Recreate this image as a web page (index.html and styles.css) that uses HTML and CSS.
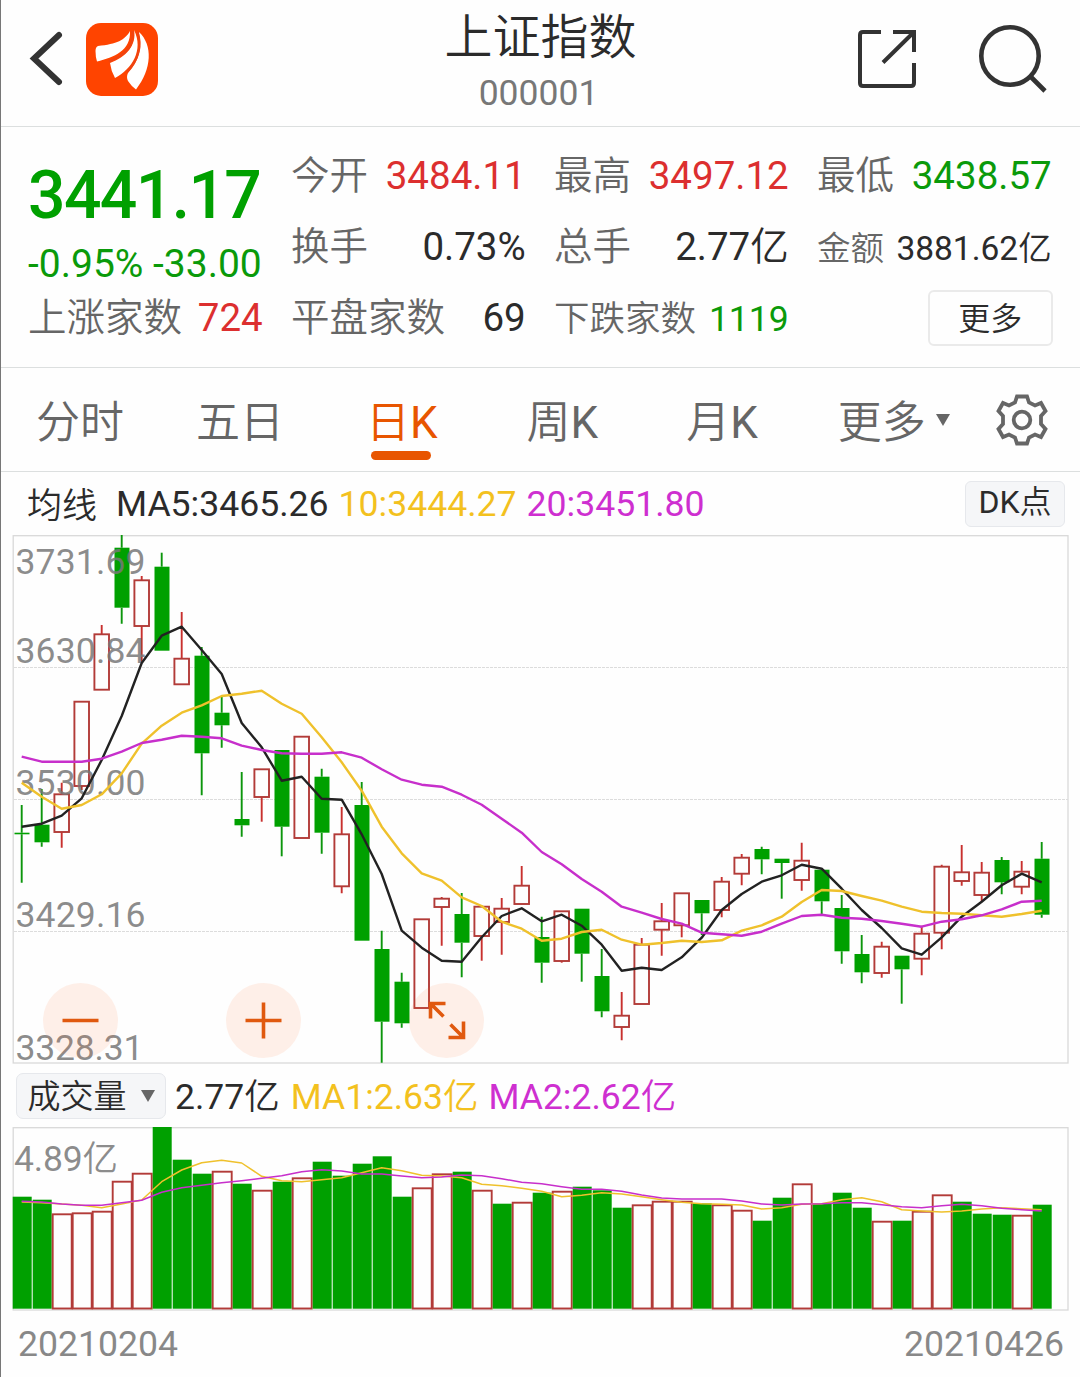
FILE: index.html
```html
<!DOCTYPE html>
<html lang="zh-CN">
  <head>
    <meta charset="UTF-8" />
    <meta name="viewport" content="width=device-width, initial-scale=1.0" />
    <title>上证指数 000001</title>
    <link rel="stylesheet" href="styles.css">
  </head>
  <body>
    <header class="header">
      <div class="header-left">
        <svg class="back-icon" width="36" height="58" viewBox="0 0 36 58">
          <path d="M30 5 L5 28.500 L30 52" fill="none" stroke="#333" stroke-width="6" stroke-linecap="round" stroke-linejoin="miter" />
        </svg>
        <svg class="logo" width="72" height="73" viewBox="0 0 72 73">
          <rect width="72" height="73" rx="15" fill="#ff4400" />
          <path d="M44 8 C39 17 31 21 12 23 Q9.500 24 9.500 28 Q9.500 34 11 38.500 C28 34 45 28 44 8 Z" fill="#fff" />
          <path d="M48 7 C51 22 40 34 24 40 Q25 48 29 55 C46 46 58 27 48 7 Z" fill="#fff" />
          <path d="M53 9 C56 26 53 38 42 50 Q40 54 42 58 Q46 64 50 66.500 C66 46 67 22 53 9 Z" fill="#fff" />
          <path d="M46.500 8 C48 22 42 31 23 38.500 M51.500 9 C57 24 51 38 41 49" fill="none" stroke="#ee4312" stroke-width="2" />
        </svg>
      </div>
      <div class="header-title">
        <h1>上证指数</h1>
        <p>000001</p>
      </div>
      <div class="header-right">
        <svg width="60" height="60" viewBox="0 0 60 60" fill="none" stroke="#333" stroke-width="4">
          <path d="M24 3 H6 Q3 3 3 6 V54 Q3 57 6 57 H54 Q57 57 57 54 V34" />
          <path d="M36 3 H57 V23 M57 3 L26 33.500" />
        </svg>
        <svg width="72" height="72" viewBox="0 0 72 72" fill="none" stroke="#333" stroke-width="4.600">
          <circle cx="33" cy="32" r="28.700" />
          <path d="M53 52 L68 67" />
        </svg>
      </div>
    </header>

    <section class="summary">
      <div class="summary-col">
        <div class="price down">3441.17</div>
        <div class="change down">-0.95% -33.00</div>
        <div class="cell"><span>上涨家数</span><b class="up">724</b></div>
      </div>
      <div class="summary-col">
        <div class="cell"><span>今开</span><b class="up open">3484.11</b></div>
        <div class="cell"><span>换手</span><b>0.73%</b></div>
        <div class="cell"><span>平盘家数</span><b>69</b></div>
      </div>
      <div class="summary-col">
        <div class="cell"><span>最高</span><b class="up">3497.12</b></div>
        <div class="cell"><span>总手</span><b>2.77亿</b></div>
        <div class="cell cell-medium"><span>下跌家数</span><b class="down">1119</b></div>
      </div>
      <div class="summary-col">
        <div class="cell"><span>最低</span><b class="down">3438.57</b></div>
        <div class="cell cell-small"><span>金额</span><b>3881.62亿</b></div>
        <div class="cell cell-end"><button class="more-button">更多</button></div>
      </div>
    </section>

    <nav class="tabs">
      <a class="tab">分时</a>
      <a class="tab">五日</a>
      <a class="tab active">日K</a>
      <a class="tab tab-week">周K</a>
      <a class="tab tab-month">月K</a>
      <a class="tab tab-more">更多<i class="caret"></i></a>
      <svg class="gear" width="54" height="54" viewBox="-27 -27 54 54" fill="none" stroke="#666" stroke-width="3.800">
        <path d="M-5 -23.500 H5 L7 -17.500 L13 -14.500 L19 -17 L23.500 -9 L19 -4 V4 L23.500 9 L19 17 L13 14.500 L7 17.500 L5 23.500 H-5 L-7 17.500 L-13 14.500 L-19 17 L-23.500 9 L-19 4 V-4 L-23.500 -9 L-19 -17 L-13 -14.500 L-7 -17.500 Z" />
        <circle r="8.300" />
      </svg>
    </nav>

    <div class="ma-row">
      <span class="ma-name">均线</span>
      <span class="ma5">MA5:3465.26</span>
      <span class="ma10">10:3444.27</span>
      <span class="ma20">20:3451.80</span>
      <button class="dk-button">DK点</button>
    </div>

    <div class="chart">
      <svg id="kline" width="1057" height="529" viewBox="12 535 1057 529"></svg>
      <div class="chart-tools">
        <svg class="tool" viewBox="-37.500 -37.500 75 75"><path d="M-18 0 H18" /></svg>
        <svg class="tool" viewBox="-37.500 -37.500 75 75"><path d="M-18 0 H18 M0 -18 V18" /></svg>
        <svg class="tool" viewBox="-37.500 -37.500 75 75"><path d="M-3 -4 L-16 -17 M-16 -2 V-17 H-1 M4 4 L17 17 M17 1 V17 H2" /></svg>
      </div>
    </div>

    <div class="volume-row">
      <button class="volume-select">成交量<i class="caret caret-big"></i></button>
      <span class="vol-now">2.77亿</span>
      <span class="ma10">MA1:2.63亿</span>
      <span class="ma20">MA2:2.62亿</span>
    </div>

    <div class="volume-chart">
      <svg id="volume" width="1057" height="184" viewBox="12 1127 1057 184"></svg>
    </div>

    <footer class="dates">
      <span>20210204</span>
      <span>20210426</span>
    </footer>

    <script src="chart.js"></script>
  </body>
</html>
```
FILE: styles.css
```css
/* Basic reset */
* {
  margin: 0;
  padding: 0;
  box-sizing: border-box;
}

body {
  width: 1080px;
  height: 1377px;
  overflow: hidden;
  border-left: 1px solid #777;
  background-color: #fefefe;
  font-family: Roboto, "Noto Sans CJK SC DemiLight", "Noto Sans CJK SC", sans-serif;
  color: #2b2b2b;
}

svg {
  display: block;
}

button {
  font-family: inherit;
  color: inherit;
}

.up {
  color: #dc2f2f;
}

.down {
  color: #0a9a0a;
}

/* Header */
.header {
  display: grid;
  grid-template-columns: 1fr auto 1fr;
  height: 127px;
  border-bottom: 1px solid #dcdfdf;
}

.header-left {
  display: flex;
  padding: 23px 0 0 28px;
}

.back-icon {
  margin: 7px 21px 0 0;
}

.header-title {
  text-align: center;
}

.header-title h1 {
  font-size: 48px;
  font-weight: 400;
  line-height: 56px;
  padding-top: 10px;
}

.header-title p {
  font-size: 35.500px;
  line-height: 40px;
  margin-top: 7px;
  padding-right: 4px;
  color: #777;
}

.header-right {
  display: flex;
  justify-content: flex-end;
  gap: 60px;
  padding: 24px 31px 0 0;
}

.header-right svg:first-child {
  margin-top: 5px;
}

/* Quote summary */
.summary {
  display: flex;
  height: 241px;
  padding: 13px 0 0 27px;
  border-bottom: 1px solid #dcdfdf;
}

.summary-col {
  width: 235px;
  margin-right: 28.300px;
}

.price {
  height: 109px;
  line-height: 111px;
  font-size: 66px;
  font-weight: 500;
  letter-spacing: -1.600px;
  white-space: nowrap;
  color: #00a000;
}

.change {
  height: 30px;
  line-height: 30px;
  margin-bottom: 3px;
  font-size: 39px;
  white-space: nowrap;
}

.cell {
  display: flex;
  justify-content: space-between;
  align-items: center;
  height: 71px;
  font-size: 38.500px;
  line-height: 71px;
  white-space: nowrap;
}

.cell span {
  color: #666;
}

.cell b {
  font-weight: 400;
}

.cell-medium {
  padding-top: 4px;
  font-size: 35.500px;
}

.cell-small {
  padding-top: 4px;
  font-size: 33.500px;
}

.cell-end {
  justify-content: flex-end;
}

.more-button {
  width: 125px;
  height: 56px;
  margin-right: -1px;
  padding-bottom: 3px;
  background-color: #fefefe;
  border: 2px solid #eaeaea;
  border-radius: 6px;
  font-size: 32px;
}

/* Period tabs */
.tabs {
  display: flex;
  align-items: center;
  height: 104px;
  padding-left: 35px;
  border-bottom: 1px solid #dcdfdf;
  font-size: 44px;
  color: #666;
}

.tab {
  position: relative;
  height: 103px;
  line-height: 110px;
  margin-right: 72px;
  white-space: nowrap;
}

.tab.active {
  color: #e85500;
  margin: 0 89px 0 10px;
}

.tab.active::after {
  content: "";
  position: absolute;
  left: 5px;
  bottom: 11px;
  width: 60px;
  height: 9px;
  border-radius: 5px;
  background-color: #e85500;
}

.tab-week {
  margin-right: 88px;
}

.tab-month {
  margin-right: 80px;
}

.tab-more {
  margin-right: 45px;
}

.caret {
  display: inline-block;
  margin-left: 10px;
  vertical-align: 12px;
  border: 7.500px solid transparent;
  border-top: 12px solid #666;
  border-bottom: 0;
}

.caret-big {
  vertical-align: 6px;
  margin-left: 14px;
}

/* Moving averages */
.ma-row {
  display: flex;
  align-items: center;
  height: 63px;
  padding: 0 15px 0 26px;
  font-size: 35.600px;
  white-space: nowrap;
}

.ma-name {
  margin: 0 19px 3px 0;
  font-size: 35px;
}

.ma5 {
  margin-right: 10px;
}

.ma10 {
  margin-right: 10px;
  color: #f3c11e;
}

.ma20 {
  color: #ce2fd0;
}

.dk-button {
  width: 100px;
  height: 46px;
  margin-left: auto;
  background-color: #f5f6f8;
  border: 1px solid #e6e8ec;
  border-radius: 6px;
  font-size: 32px;
  line-height: 36px;
  padding-bottom: 4px;
}

/* Candle chart */
.chart {
  position: relative;
  height: 529px;
  margin-left: 11px;
}

.chart-tools {
  position: absolute;
  left: 31px;
  top: 448px;
  display: flex;
  gap: 108px;
}

.tool {
  width: 75px;
  height: 75px;
  border-radius: 50%;
  background-color: rgba(255, 112, 40, 0.1);
  fill: none;
  stroke: #e0590f;
  stroke-width: 3.600;
}

.frame {
  fill: none;
  stroke: #d9d9d9;
  stroke-width: 1.300;
}

.grid {
  stroke: #dcdcdc;
  stroke-dasharray: 3 1;
}

.axis {
  font-size: 35.500px;
  fill: #777;
  fill-opacity: 0.85;
}

.rise {
  fill: #fefefe;
  stroke: #b23b38;
  stroke-width: 1.900;
}

.fall {
  fill: #00a000;
}

.wick-rise {
  stroke: #c8302e;
  stroke-width: 1.900;
}

.wick-fall {
  stroke: #0c960c;
  stroke-width: 1.900;
}

.line {
  fill: none;
  stroke-width: 2.400;
  stroke-linejoin: round;
}

.line-thin {
  stroke-width: 1.500;
}

.black {
  stroke: #222;
}

.yellow {
  stroke: #efc12c;
}

.purple {
  stroke: #c72fcb;
}

/* Volume */
.volume-row {
  display: flex;
  align-items: center;
  height: 63px;
  padding-left: 15px;
  font-size: 35.500px;
  white-space: nowrap;
}

.volume-row span {
  padding-bottom: 5px;
}

.volume-select {
  width: 150px;
  height: 46px;
  margin-right: 9px;
  background-color: #f5f6f8;
  border: 1px solid #e6e8ec;
  border-radius: 7px;
  font-size: 33px;
  line-height: 45px;
}

.vol-now {
  margin-right: 11px;
}

.volume-chart {
  height: 184px;
  margin-left: 11px;
}

.dates {
  display: flex;
  justify-content: space-between;
  padding: 0 16px 0 17px;
  font-size: 35.600px;
  line-height: 66px;
  color: #888;
}
```
FILE: chart.js
```js
// direction, high, body top, body bottom, low
const candles = [
  ["g", 805, 832.7, 834.3, 882.7], ["g", 789, 824.7, 842.3, 846.7], ["r", 782.7, 794.3, 832, 847.7],
  ["r", 701.7, 701.7, 786, 790], ["r", 625, 634.3, 689.7, 689.7], ["g", 535, 547.7, 607.7, 623.7],
  ["r", 576, 580.3, 626, 661.7], ["g", 552.7, 566.7, 650.7, 650.7], ["r", 612, 658.7, 684.3, 684.3],
  ["g", 647, 655.7, 753.3, 795.3], ["g", 696, 712.7, 725.3, 747.7], ["g", 772, 819, 825.3, 836.7],
  ["r", 769.3, 769.3, 797, 821.7], ["g", 750, 750, 826.7, 856.3], ["r", 736.7, 736.7, 838, 838],
  ["g", 768.7, 776.7, 832.7, 853.7], ["r", 807, 834.3, 886.3, 893.3], ["g", 782, 805, 940.7, 940.7],
  ["g", 930.7, 949, 1021.7, 1062.7], ["g", 972.7, 981.7, 1023.3, 1027.7], ["r", 919.3, 919.3, 1008, 1008],
  ["r", 897, 898.7, 907, 945.7], ["g", 893, 914, 942.7, 977.3], ["r", 906.7, 906.7, 936, 960.7],
  ["r", 898, 908.7, 922, 954.7], ["r", 866, 885.7, 904, 904], ["g", 916.7, 937, 962.7, 982.7],
  ["r", 911.3, 911.3, 961, 962.7], ["g", 908.7, 908.7, 953.7, 981.7], ["g", 949, 976, 1011.3, 1017.3],
  ["r", 992, 1015.7, 1027, 1040.3], ["r", 938, 944.7, 1004, 1004], ["r", 903, 921.3, 929.7, 955.7],
  ["r", 893.3, 893.3, 925.3, 937.3], ["g", 900, 900, 913.3, 935], ["r", 877, 881.7, 910, 917.3],
  ["r", 854, 857.7, 873.7, 885.3], ["g", 846.7, 849, 859.3, 874.3], ["g", 858.7, 858.7, 863, 898.7],
  ["r", 842.7, 860.7, 880, 890.7], ["g", 869.7, 869.7, 901.3, 915], ["g", 895, 908, 951.3, 963.7],
  ["g", 935, 954, 972.3, 983.3], ["r", 941.7, 946.7, 973, 977.7], ["g", 955.7, 955.7, 969.3, 1003.7],
  ["r", 925.7, 933.7, 958.7, 975.3], ["r", 864.7, 866.7, 932.7, 949.3], ["r", 845, 872.3, 881, 885.7],
  ["r", 862, 872.7, 895, 902], ["g", 857, 860, 882.3, 894.3], ["r", 861, 871.7, 886.7, 894.3],
  ["g", 842, 858.7, 914.7, 917.7],
];

const ma5 = [
  826.7, 823.7, 815.7, 798.3, 760, 716, 663, 635.7, 626.7, 650, 674, 723, 747.3, 780.7, 776.7, 798.7,
  799.7, 834.3, 874, 930.7, 947.7, 960.7, 961.7, 937.3, 916, 908.3, 921.3, 914.7, 925.7, 944.7, 970.7,
  967.7, 970, 957.3, 937.7, 910, 894, 881.7, 875.3, 864.7, 868.7, 888.7, 910, 928, 948.3, 954.7, 937.3,
  916.7, 901.7, 885.3, 873.7, 882.3,
];

const ma10 = [
  782.7, 796.7, 808.7, 805, 794.3, 773.3, 743.7, 725.7, 712.7, 705.3, 696, 693.7, 690.7, 703.7, 713.7,
  737.3, 762.3, 790.7, 826.7, 853.3, 873.3, 880.7, 897.3, 906, 921.7, 928.7, 940.7, 938.7, 932, 929.7,
  939.7, 944.7, 943, 940.7, 942, 940.3, 930.7, 925.3, 916.7, 902, 890, 891, 896, 900.7, 906.7, 911.7,
  913, 913.7, 915.3, 916.7, 914, 910.7,
];

const ma20 = [
  756.7, 761.7, 761.7, 761.7, 758.7, 751.7, 743, 739.7, 735.7, 736.7, 738.3, 745.7, 750, 753.3, 753.7,
  753.7, 752.3, 757.7, 769.3, 779.7, 784.7, 786.7, 794.7, 804.7, 818.7, 832.7, 852, 864.3, 879, 891.7,
  906.7, 912.7, 919, 923.7, 932.7, 934.3, 935.7, 931.7, 923.7, 916, 914.7, 917.7, 918.7, 921, 923.7,
  926.7, 921.7, 919.3, 915.3, 909.3, 901.7, 900.7,
];

// top edge of every volume bar
const volumes = [
  1196.7, 1199.7, 1214.3, 1213.3, 1211.7, 1181.7, 1173.7, 1126.7, 1159.7, 1173.7, 1171.7, 1183.7, 1190.7,
  1181.7, 1178.3, 1161.7, 1175.7, 1163.7, 1156.3, 1196.7, 1188.3, 1174.3, 1171.7, 1190.7, 1203.7, 1202.7,
  1192.7, 1191.7, 1186.7, 1190.3, 1207.7, 1205.3, 1201.7, 1201.7, 1203.3, 1205.3, 1210.7, 1220.7, 1197.7,
  1184.3, 1203.7, 1192.7, 1207.7, 1221.7, 1220.7, 1211.7, 1195.3, 1201.7, 1213.7, 1214.7, 1215.7, 1204.7,
];
const volumeColors = "ggrrrrrgggrgrgrgggggrrgrgrgrgggrrrgrrggrgggrgrrgggrg";

const volMa1 = [
  1202, 1202.7, 1204, 1205.3, 1207.7, 1204, 1200, 1181.7, 1170, 1162.7, 1160.3, 1163, 1176.3, 1180.7,
  1181.7, 1179.7, 1177.7, 1172.7, 1167.7, 1170.7, 1175.3, 1176, 1177.7, 1184.3, 1185.7, 1188.3, 1191.3,
  1196.7, 1195.3, 1192.7, 1194, 1196.7, 1199.7, 1202.3, 1203.7, 1204.3, 1205, 1209, 1207.7, 1204.3,
  1203.7, 1199.7, 1197.7, 1201.7, 1209.7, 1211, 1212, 1211, 1209, 1207.7, 1208.7, 1209.7,
];

const volMa2 = [
  1201.3, 1202, 1204, 1205.3, 1205.3, 1202.7, 1200.3, 1192.3, 1187.7, 1185.3, 1182.7, 1180.7, 1178.3,
  1175.7, 1171.7, 1169.7, 1171, 1174, 1174, 1176, 1177.7, 1177, 1175, 1175.7, 1178.7, 1182.3, 1183.7,
  1186.7, 1189.3, 1189.3, 1191.3, 1195, 1198, 1199, 1199, 1199, 1201, 1204, 1205, 1204, 1203.7, 1202.7,
  1202.7, 1204.7, 1206.7, 1207.7, 1205.7, 1204.3, 1205.7, 1208.3, 1209.7, 1211,
];

const STEP = 20;
const FIRST_X = 21.7;

function line(values, className) {
  const points = values.map((y, i) => `${FIRST_X + i * STEP},${y}`).join(" ");
  return `<polyline class="line ${className}" points="${points}" />`;
}

function label(text, x, y, width) {
  return `<text class="axis" x="${x}" y="${y}" textLength="${width}">${text}</text>`;
}

function drawKline() {
  let out = '<rect class="frame" x="13.2" y="535.7" width="1054.8" height="527.3" />';
  [667.5, 799.5, 931.5].forEach((y) => {
    out += `<path class="grid" d="M14 ${y} H1068" />`;
  });

  candles.forEach(([dir, high, top, bottom, low], i) => {
    const x = FIRST_X + i * STEP;
    const wick = dir === "r" ? "wick-rise" : "wick-fall";
    out += `<path class="${wick}" d="M${x} ${high} V${top} M${x} ${bottom} V${low}" />`;
    if (dir === "r") {
      out += `<rect class="rise" x="${x - 7.3}" y="${top}" width="14.6" height="${bottom - top}" />`;
    } else {
      out += `<rect class="fall" x="${x - 7.2}" y="${top}" width="15" height="${bottom - top}" />`;
    }
  });

  out += label("3731.69", 15.5, 574, 130);
  out += label("3630.84", 15.5, 663, 130);
  out += label("3530.00", 15.5, 795, 130);
  out += label("3429.16", 15.5, 927, 130);
  out += label("3328.31", 15.5, 1059.5, 128);

  out += line(ma5, "black") + line(ma10, "yellow") + line(ma20, "purple");
  document.getElementById("kline").innerHTML = out;
}

function drawVolume() {
  let out = '<rect class="frame" x="13.2" y="1127.7" width="1054.8" height="182.3" />';
  out += label("4.89亿", 14, 1171, 104);

  volumes.forEach((top, i) => {
    const x = 12.7 + i * STEP;
    if (volumeColors[i] === "r") {
      out += `<rect class="rise" x="${x}" y="${top}" width="19" height="${1308.5 - top}" />`;
    } else {
      out += `<rect class="fall" x="${x}" y="${top}" width="19" height="${1308.7 - top}" />`;
    }
  });

  out += line(volMa1, "yellow line-thin") + line(volMa2, "purple line-thin");
  document.getElementById("volume").innerHTML = out;
}

drawKline();
drawVolume();
```
